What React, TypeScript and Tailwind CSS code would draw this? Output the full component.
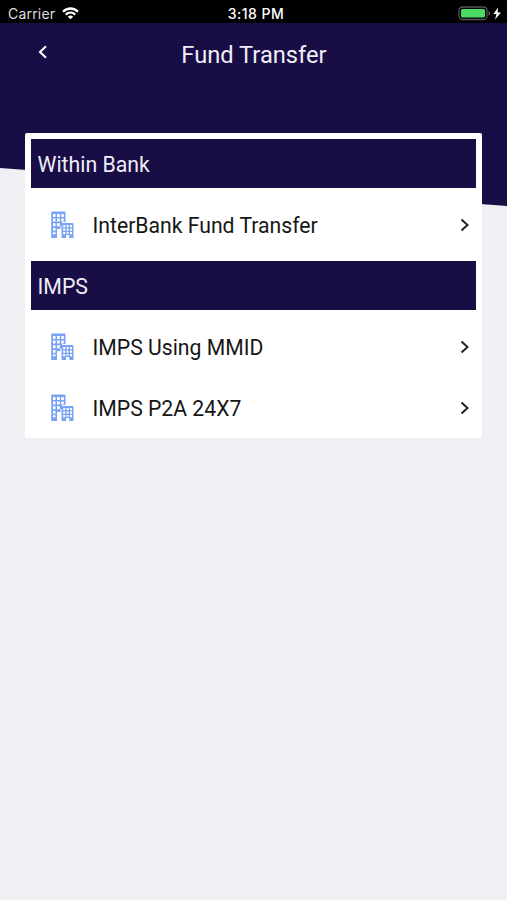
import React from "react";

function Building() {
  return (
    <svg className="ml-[20px] h-[28px] w-[23px] shrink-0" viewBox="0 0 23 28" fill="none">
      <path
        fillRule="evenodd"
        fill="#7ba3f5"
        d="M1 .5h12.500q1 0 1 1V11H11v4H9.500v3H6v9H.2V1.500q0-1 .8-1Z
           M2 3v3h2.500V3Z M6 3v3h2.800V3Z M10.300 3v3h2.500V3Z
           M2 7.500v3h2.500v-3Z M6 7.500v3h2.800v-3Z M10.300 7.500v3h2.500v-3Z
           M2 12.200v3h2.500v-3Z M6 12.200v3h2.800v-3Z
           M2 17v2.800h2.500V17Z M2 21.300v2h2.500v-2Z"
      />
      <path
        fillRule="evenodd"
        fill="#7ba3f5"
        d="M11.500 12h10q1 0 1 1v14h-4.200v-3h-3.300v3h-4.500V13q0-1 1-1Z
           M12.200 14v2.300h2V14Z M15.600 14v2.300h2V14Z M19 14v2.300h2V14Z
           M12.200 17.500v2.300h2v-2.300Z M15.600 17.500v2.300h2v-2.300Z M19 17.500v2.300h2v-2.300Z
           M12.200 21v2.300h2V21Z M15.600 21v1.800h2V21Z M19 21v2.300h2V21Z"
      />
    </svg>
  );
}

function Section({ title }: { title: string }) {
  return (
    <h2 className="flex h-[49px] items-center bg-[#190d46] pl-[6.500px] pt-[2px] text-[21.300px] text-[#eeecf6]">
      {title}
    </h2>
  );
}

function Row({ label }: { label: string }) {
  return (
    <button className="flex h-[61px] w-full items-center text-left text-[21.200px] text-[#161616]">
      <Building />
      <span className="ml-[18.500px] grow whitespace-nowrap pt-[3px]">{label}</span>
      <svg className="mr-[6.500px] h-[14px] w-[10px]" viewBox="0 0 10 14" fill="none" stroke="#222" strokeWidth="2">
        <path d="M1.500 1.500 7.500 7l-6 5.500" />
      </svg>
    </button>
  );
}

export default function App() {
  return (
    <div className="relative h-[900px] w-full overflow-hidden bg-[#efeff4] font-['Roboto',sans-serif]">
      <div className="absolute inset-x-0 top-0 h-[206px] bg-[#190d46] [clip-path:polygon(0_0,100%_0,100%_100%,0_168px)]" />
      <div className="relative">
        <div className="grid h-[23px] grid-cols-3 items-center bg-black px-2 pt-[4px] font-['Inter',sans-serif] text-[14px] text-[#dedede]">
          <div className="-mt-px flex items-center gap-[7px]">
            <span className="tracking-[0.200px]">Carrier</span>
            <svg className="h-[13px] w-[17px]" viewBox="0 0 17 13" fill="none" stroke="#fff" strokeWidth="2.300">
              <path d="M1 4.700c4.300-4.300 10.700-4.300 15 0M3.700 7.600c2.800-2.700 6.800-2.700 9.600 0" />
              <path d="M8.500 12.300 5.800 9.700c1.500-1.500 3.900-1.500 5.400 0Z" fill="#fff" stroke="none" />
            </svg>
          </div>
          <span className="-mt-px pl-[5px] text-center font-medium tracking-[0.500px] text-white">3:18 PM</span>
          <svg className="-mr-[3px] -mt-px h-[15px] w-[44px] justify-self-end" viewBox="0 0 44 15">
            <rect x="1" y="1" width="28" height="12.500" rx="3.500" fill="none" stroke="#555" strokeWidth="1.300" />
            <rect x="3" y="3" width="24" height="8.500" rx="1.500" fill="#4cd964" />
            <path d="M30.500 5c2 .6 2 4 0 4.600Z" fill="#666" />
            <path d="M40 1.500 35.500 8h3l-1.500 5.500L43 6.500h-3.400Z" fill="#fff" />
          </svg>
        </div>
        <header className="grid h-[110px] grid-cols-[58px_1fr_58px] items-start pt-[17px]">
          <svg className="ml-[37px] mt-[5px] h-[14px] w-[11px]" viewBox="0 0 11 14" fill="none" stroke="#fff" strokeWidth="2">
            <path d="M9 1.300 3 7l6 5.700" />
          </svg>
          <h1 className="pl-px pt-px text-center text-[23.700px] leading-[28px] text-[#f0eef8]">Fund Transfer</h1>
        </header>
        <main className="mx-[25px] h-[305px] rounded-[2px] bg-white px-[6px] pt-[6px]">
          <Section title="Within Bank" />
          <div className="py-[6px]">
            <Row label="InterBank Fund Transfer" />
          </div>
          <Section title="IMPS" />
          <div className="pt-[6px]">
            <Row label="IMPS Using MMID" />
            <Row label="IMPS P2A 24X7" />
          </div>
        </main>
      </div>
    </div>
  );
}
